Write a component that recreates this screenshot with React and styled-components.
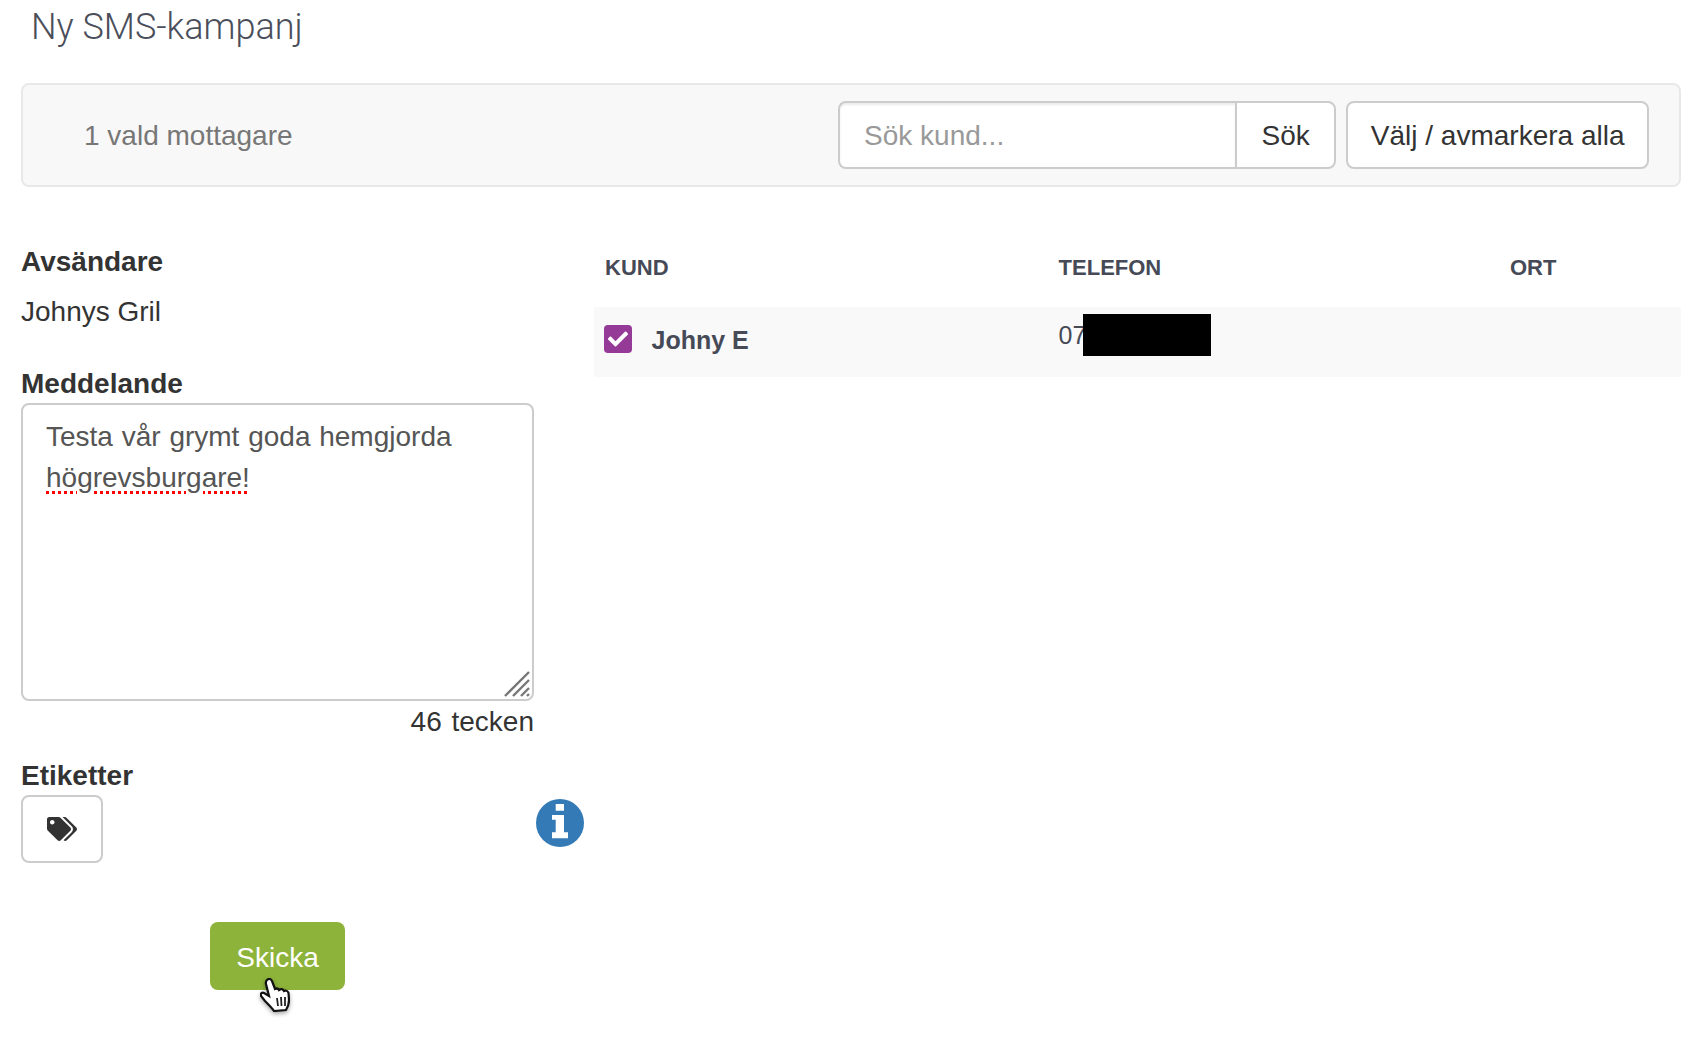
import React from "react";
import styled, { createGlobalStyle } from "styled-components";
import { FaTags, FaCheck } from "react-icons/fa";

const Global = createGlobalStyle`
  html, body { margin: 0; padding: 0; background: #fff; }
  body { font-family: "Liberation Sans", Arial, sans-serif; font-size: 28px; color: #333; }
  * { box-sizing: border-box; }
`;

const Page = styled.div`
  width: 1690px;
  height: 1038px;
  overflow: hidden;
`;

const Title = styled.h1`
  margin: 0 0 29px 31px;
  font-family: Roboto, "Liberation Sans", sans-serif;
  font-weight: 300;
  font-size: 36px;
  line-height: 54px;
  color: #4a4e5a;
`;

const Panel = styled.div`
  display: flex;
  align-items: center;
  justify-content: space-between;
  margin-left: 21px;
  width: 1660px;
  height: 104px;
  padding: 0 30px 0 61px;
  background: #f8f8f8;
  border: 2px solid #e8e8e8;
  border-radius: 8px;
`;

const Count = styled.span`
  margin-top: 1px;
  font-size: 28px;
  color: #777;
`;

const Tools = styled.div`
  display: flex;
  gap: 10px;
  margin-top: -1px;
`;

const SearchGroup = styled.div`
  display: flex;
`;

const SearchInput = styled.input`
  width: 397px;
  height: 68px;
  padding: 2px 24px 0;
  background: #fff;
  border: 2px solid #ccc;
  border-right: 0;
  border-radius: 8px 0 0 8px;
  box-shadow: inset 0 2px 2px rgba(0, 0, 0, 0.075);
  font: 28px "Liberation Sans", Arial, sans-serif;
  color: #555;
  outline: none;
  &::placeholder { color: #999; opacity: 1; }
`;

const Button = styled.button`
  height: 68px;
  padding: 2px ${(p) => p.$pad}px 0;
  background: #fff;
  border: 2px solid #ccc;
  border-radius: ${(p) => (p.$joined ? "0 8px 8px 0" : "8px")};
  font: 28px "Liberation Sans", Arial, sans-serif;
  color: #333;
`;

const Body = styled.div`
  display: flex;
  margin: 55px 0 0 21px;
`;

const FormColumn = styled.div`
  display: flex;
  flex-direction: column;
  width: 573px;
  flex: none;
`;

const Label = styled.div`
  height: 40px;
  font-size: 28px;
  font-weight: 700;
  line-height: 40px;
  color: #333;
`;

const Value = styled.div`
  margin: 10px 0 32px;
  height: 40px;
  line-height: 40px;
  color: #333;
`;

const MessageBox = styled.div`
  position: relative;
  width: 513px;
  height: 298px;
  margin-top: -1px;
  padding: 11px 23px;
  background: #fff;
  border: 2px solid #ccc;
  border-radius: 8px;
  font-size: 28px;
  line-height: 41px;
  word-spacing: 1px;
  color: #555;
`;

const Misspelled = styled.span`
  text-decoration: underline dotted #f00 3px;
  text-underline-offset: 4px;
`;

const Grip = styled.svg`
  position: absolute;
  right: 2px;
  bottom: 2px;
  width: 26px;
  height: 26px;
  stroke: #777;
  stroke-width: 2.4;
`;

const CharCount = styled.div`
  width: 513px;
  height: 40px;
  margin: 1px 0 14px;
  text-align: right;
  line-height: 40px;
  word-spacing: 2px;
  color: #333;
`;

const TagRow = styled.div`
  display: flex;
  align-items: flex-start;
  justify-content: space-between;
  width: 563px;
  margin-top: -1px;
`;

const TagButton = styled.button`
  display: flex;
  align-items: center;
  justify-content: center;
  width: 82px;
  height: 68px;
  padding: 0;
  background: #fff;
  border: 2px solid #ccc;
  border-radius: 8px;
  color: #333;
  font-size: 30px;
`;

const InfoIcon = styled.svg`
  width: 48px;
  height: 48px;
  margin-top: 4px;
`;

const SendButton = styled.button`
  position: relative;
  width: 135px;
  height: 68px;
  margin: 59px 0 0 189px;
  padding: 4px 0 0;
  background: #8db33a;
  border: 0;
  border-radius: 8px;
  font: 28px "Liberation Sans", Arial, sans-serif;
  color: #fff;
`;

const Hand = styled.svg`
  position: absolute;
  left: 50px;
  top: 56px;
  width: 30px;
  height: 34px;
  filter: drop-shadow(0 2px 2px rgba(0, 0, 0, 0.35));
`;

const TableArea = styled.div`
  flex: 1;
  margin-right: 9px;
`;

const HeadRow = styled.div`
  display: grid;
  grid-template-columns: 453.6px 451.4px 1fr;
  height: 52px;
  margin-bottom: 13px;
  align-items: center;
`;

const HeadCell = styled.div`
  padding-left: 11px;
  font-size: 22px;
  font-weight: 700;
  color: #464a57;
`;

const DataRow = styled.div`
  display: grid;
  grid-template-columns: 453.6px 451.4px 1fr;
  height: 70px;
  background: #f9f9f9;
`;

const NameCell = styled.div`
  display: flex;
  align-items: center;
  gap: 19.5px;
  padding-left: 10px;
`;

const Check = styled.span`
  display: flex;
  align-items: center;
  justify-content: center;
  width: 28px;
  height: 28px;
  margin-top: -6px;
  background: #953a97;
  border-radius: 4px;
  color: #fff;
  font-size: 20px;
`;

const Name = styled.span`
  margin-top: -4px;
  font-size: 25px;
  font-weight: 700;
  color: #464a57;
`;

const PhoneCell = styled.div`
  position: relative;
  padding: 13px 0 0 11px;
  font-size: 25px;
  line-height: 30px;
  color: #464a57;
`;

const Redaction = styled.div`
  position: absolute;
  left: 35px;
  top: 7px;
  width: 128px;
  height: 42px;
  background: #000;
`;

export default function App() {
  return (
    <Page>
      <Global />
      <Title>Ny SMS-kampanj</Title>
      <Panel>
        <Count>1 vald mottagare</Count>
        <Tools>
          <SearchGroup>
            <SearchInput placeholder="Sök kund..." />
            <Button $joined $pad={24.5}>Sök</Button>
          </SearchGroup>
          <Button $pad={22.5}>Välj / avmarkera alla</Button>
        </Tools>
      </Panel>
      <Body>
        <FormColumn>
          <Label>Avsändare</Label>
          <Value>Johnys Gril</Value>
          <Label>Meddelande</Label>
          <MessageBox>
            Testa vår grymt goda hemgjorda <Misspelled>högrevsburgare!</Misspelled>
            <Grip viewBox="0 0 26 26">
              <path d="M1 25 L25 1 M9 25 L25 9 M17 25 L25 17 M23 25 L25 23" />
            </Grip>
          </MessageBox>
          <CharCount>46 tecken</CharCount>
          <Label>Etiketter</Label>
          <TagRow>
            <TagButton><FaTags /></TagButton>
            <InfoIcon viewBox="0 0 48 48">
              <circle cx="24" cy="24" r="24" fill="#337ab7" />
              <path
                fill="#fff"
                d="M19.7 5 H28 V11.7 H19.7 Z M16 16 H28 V33.3 H32 V39.3 H16 V33.3 H19.7 V20.7 H16 Z"
              />
            </InfoIcon>
          </TagRow>
          <SendButton>
            Skicka
            <Hand viewBox="0 0 30 34">
              <path
                d="M7 2 C9 0 11 1 12 3 L15 11 C17 10 18 10 19 12 C21 10.5 23 11 24 13 C26 12 28 13 28.5 15 L29 22 C29 26 28 29 26 32 L14 33 C12 30 9 27 5 23 L1 18 C0 16 2 14 4 15 L9 18 L6 6 C5.5 4 6 3 7 2 Z"
                fill="#fff"
                stroke="#111"
                strokeWidth="2.2"
              />
              <path d="M17 20 L18 28 M21 19 L21.5 28 M25 19 L25 28" stroke="#222" strokeWidth="1.8" fill="none" />
            </Hand>
          </SendButton>
        </FormColumn>
        <TableArea>
          <HeadRow>
            <HeadCell>KUND</HeadCell>
            <HeadCell>TELEFON</HeadCell>
            <HeadCell>ORT</HeadCell>
          </HeadRow>
          <DataRow>
            <NameCell>
              <Check><FaCheck /></Check>
              <Name>Johny E</Name>
            </NameCell>
            <PhoneCell>
              07
              <Redaction />
            </PhoneCell>
            <div />
          </DataRow>
        </TableArea>
      </Body>
    </Page>
  );
}
